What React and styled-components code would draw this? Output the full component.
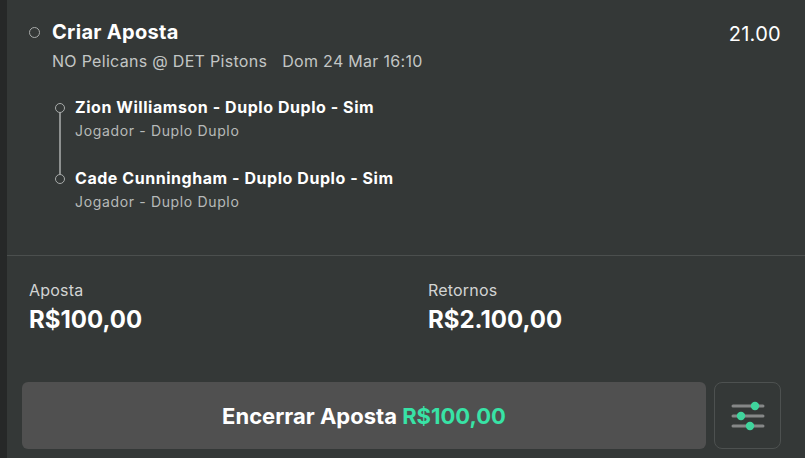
import React from 'react'
import styled, { createGlobalStyle } from 'styled-components'

const Global = createGlobalStyle`
  html, body { margin: 0; padding: 0; background: #262828; }
  body { font-family: Inter, "Noto Sans", sans-serif; -webkit-font-smoothing: antialiased; }
  * { box-sizing: border-box; }
`

const legs = [
  { name: 'Zion Williamson - Duplo Duplo - Sim', market: 'Jogador - Duplo Duplo' },
  { name: 'Cade Cunningham - Duplo Duplo - Sim', market: 'Jogador - Duplo Duplo' },
]

function SlidersIcon() {
  return (
    <svg width="36" height="32" viewBox="0 0 36 32">
      <g stroke="#858787" strokeWidth="3" strokeLinecap="round">
        <line x1="3" y1="6" x2="33" y2="6" />
        <line x1="3" y1="16" x2="33" y2="16" />
        <line x1="3" y1="26" x2="33" y2="26" />
      </g>
      <g fill="#3fd49c">
        <circle cx="25" cy="6" r="4.2" />
        <circle cx="11" cy="16" r="4.2" />
        <circle cx="20" cy="26" r="4.2" />
      </g>
    </svg>
  )
}

export default function App() {
  return (
    <>
      <Global />
      <Page>
        <Strip />
        <Main>
          <Bet>
            <Header>
              <Dot />
              <HeaderText>
                <Title>Criar Aposta</Title>
                <Event>
                  <span>NO Pelicans @ DET Pistons</span>
                  <span>Dom 24 Mar 16:10</span>
                </Event>
              </HeaderText>
              <Odds>21.00</Odds>
            </Header>
            <Legs>
              {legs.map((l, i) => (
                <Leg key={i} $last={i === legs.length - 1}>
                  <LegDot />
                  <LegName>{l.name}</LegName>
                  <LegMarket>{l.market}</LegMarket>
                </Leg>
              ))}
            </Legs>
          </Bet>
          <Summary>
            <Totals>
              <Total>
                <Label>Aposta</Label>
                <Amount>R$100,00</Amount>
              </Total>
              <Total>
                <Label>Retornos</Label>
                <Amount>R$2.100,00</Amount>
              </Total>
            </Totals>
            <Actions>
              <CashOut>
                Encerrar Aposta <Green>R$100,00</Green>
              </CashOut>
              <IconButton>
                <SlidersIcon />
              </IconButton>
            </Actions>
          </Summary>
        </Main>
      </Page>
    </>
  )
}

const Page = styled.div`
  display: flex;
  width: 805px;
  height: 458px;
  overflow: hidden;
`

const Strip = styled.div`
  width: 7px;
  background: #262828;
  flex-shrink: 0;
`

const Main = styled.div`
  flex: 1;
  display: flex;
  flex-direction: column;
  background: #343837;
`

const Bet = styled.section`
  height: 256px;
  padding: 20px 24px 0 22px;
  border-bottom: 1px solid #4b4f4e;
`

const Header = styled.div`
  display: flex;
  align-items: flex-start;
`

const Dot = styled.span`
  width: 11px;
  height: 11px;
  border: 1.5px solid #a9acab;
  border-radius: 50%;
  margin-top: 7px;
  margin-right: 12px;
  flex-shrink: 0;
`

const HeaderText = styled.div`
  flex: 1;
`

const Title = styled.div`
  color: #fff;
  font-size: 20px;
  font-weight: 700;
  letter-spacing: 0.3px;
  line-height: 24px;
`

const Event = styled.div`
  display: flex;
  gap: 15px;
  color: #c3c6c5;
  font-size: 16px;
  letter-spacing: 0.3px;
  line-height: 20px;
  margin-top: 7px;
`

const Odds = styled.div`
  color: #fff;
  font-size: 20px;
  letter-spacing: 0.3px;
  line-height: 24px;
  margin-top: 2px;
`

const Legs = styled.div`
  padding: 25px 0 0 46px;
`

const Leg = styled.div`
  position: relative;
  padding-bottom: ${p => (p.$last ? 0 : '27px')};

  &::before {
    content: '';
    display: ${p => (p.$last ? 'none' : 'block')};
    position: absolute;
    left: -16px;
    top: 15px;
    bottom: -7px;
    width: 2px;
    background: #8e9190;
  }
`

const LegDot = styled.span`
  position: absolute;
  left: -20px;
  top: 7px;
  width: 10px;
  height: 10px;
  border: 1.5px solid #a9acab;
  border-radius: 50%;
  background: #343837;
`

const LegName = styled.div`
  color: #fff;
  font-size: 16px;
  font-weight: 700;
  letter-spacing: 0.55px;
  line-height: 22px;
`

const LegMarket = styled.div`
  color: #b7bab9;
  font-size: 14px;
  letter-spacing: 0.65px;
  line-height: 18px;
  margin-top: 4px;
`

const Summary = styled.section`
  flex: 1;
  display: flex;
  flex-direction: column;
  padding: 24px 24px 9px 15px;
`

const Totals = styled.div`
  display: grid;
  grid-template-columns: 399px 1fr;
  padding-left: 7px;
`

const Total = styled.div``

const Label = styled.div`
  color: #d2d4d3;
  font-size: 16px;
  letter-spacing: 0.2px;
  line-height: 20px;
`

const Amount = styled.div`
  color: #fff;
  font-size: 24px;
  font-weight: 700;
  line-height: 30px;
  margin-top: 5px;
`

const Actions = styled.div`
  margin-top: auto;
  display: flex;
  gap: 8px;
  height: 67px;
`

const CashOut = styled.button`
  flex: 1;
  background: #505050;
  border: none;
  border-radius: 6px;
  color: #fff;
  font-family: inherit;
  font-size: 22px;
  font-weight: 700;
  cursor: pointer;
`

const Green = styled.span`
  color: #38e3a6;
`

const IconButton = styled.button`
  width: 67px;
  background: transparent;
  border: 1.5px solid #4d5150;
  border-radius: 8px;
  display: flex;
  align-items: center;
  justify-content: center;
  cursor: pointer;
`
